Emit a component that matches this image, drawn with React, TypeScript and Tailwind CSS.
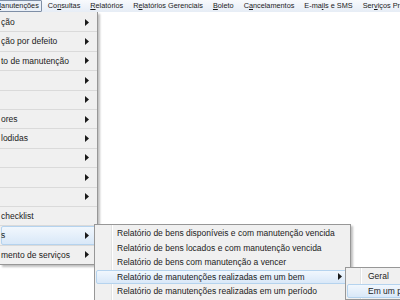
import React from "react"

const font = { fontFamily: '"Liberation Sans", Arial, sans-serif' }

function Arrow() {
  return (
    <svg width="4" height="7" viewBox="0 0 4 7" className="shrink-0">
      <path d="M0 0 L4 3.5 L0 7 Z" fill="#1a1a1a" />
    </svg>
  )
}

const topItems: { label: string; key: number }[] = [
  { label: "Manutenções", key: 0 },
  { label: "Consultas", key: 2 },
  { label: "Relatórios", key: 0 },
  { label: "Relatórios Gerenciais", key: 1 },
  { label: "Boleto", key: 0 },
  { label: "Cancelamentos", key: 1 },
  { label: "E-mails e SMS", key: 4 },
  { label: "Serviços Pre", key: 3 },
]

function Label({ label, k }: { label: string; k: number }) {
  return (
    <>
      {label.slice(0, k)}
      <span className="underline underline-offset-1">{label[k]}</span>
      {label.slice(k + 1)}
    </>
  )
}

const menu1 = [
  { label: "ção", arrow: true },
  { label: "ção por defeito", arrow: true },
  { label: "to de manutenção", arrow: true },
  { label: "", arrow: true },
  { label: "", arrow: true },
  { label: "ores", arrow: true },
  { label: "lodidas", arrow: true },
  { label: "", arrow: true },
  { label: "", arrow: true },
  { label: "", arrow: true },
  { label: "checklist", arrow: false },
  { label: "s", arrow: true, active: true },
  { label: "mento de serviços", arrow: true },
]

const menu2 = [
  { label: "Relatório de bens disponíveis e com manutenção vencida" },
  { label: "Relatório de bens locados e com manutenção vencida" },
  { label: "Relatório de bens com manutenção a vencer" },
  { label: "Relatório de manutenções realizadas em um bem", arrow: true, active: true },
  { label: "Relatório de manutenções realizadas em um período" },
]

const menu3 = [{ label: "Geral" }, { label: "Em um período", active: true }]

export default function App() {
  return (
    <div className="relative w-[400px] h-[300px] overflow-hidden bg-white text-[#1b1b1b]" style={font}>
      {/* menu bar */}
      <div className="flex h-[12px] items-center whitespace-nowrap bg-gradient-to-b from-[#f8fafd] to-[#e6edf6] text-[7.3px] leading-none">
        {topItems.map((t, i) => (
          <div
            key={t.label}
            className={
              i === 0
                ? "-ml-[6px] mr-[1px] flex h-[12px] shrink-0 items-center rounded-[1px] border border-[#7f8fa6] bg-[#eaf0f8] pl-0 pr-[2px]"
                : "flex h-[12px] shrink-0 items-center px-[5px]"
            }
          >
            <Label label={t.label} k={t.key} />
          </div>
        ))}
      </div>

      {/* first dropdown */}
      <div className="absolute left-0 top-[12px] w-[98px] border-r border-b border-[#979797] bg-[#f0f0f0] shadow-[2px_2px_2px_rgba(0,0,0,0.25)] text-[8.5px] leading-none">
        <div className="flex flex-col pt-[1px]">
          {menu1.map((m, i) => (
            <div key={i} className="flex flex-col">
              <div
                className={
                  m.active
                    ? "mx-[1px] flex h-[18.4px] items-center justify-between rounded-[2px] border border-[#b5d3ee] bg-gradient-to-b from-[#f1f7fd] to-[#d9e8f8] pl-0 pr-[6px]"
                    : "mx-[1px] flex h-[18.4px] items-center justify-between border border-transparent pr-[6px]"
                }
              >
                <span className="whitespace-nowrap -ml-[1px]">{m.label}</span>
                {m.arrow && <Arrow />}
              </div>
              {i < menu1.length - 1 && <div className="h-px bg-[#dadada]" />}
            </div>
          ))}
        </div>
      </div>

      {/* second dropdown */}
      <div className="absolute left-[94px] top-[224px] w-[257px] border border-[#979797] bg-[#f0f0f0] shadow-[2px_2px_2px_rgba(0,0,0,0.25)] text-[8.5px] leading-none">
        <div className="relative flex flex-col py-[1px]">
          <div className="absolute left-[16px] top-0 bottom-0 w-px bg-[#e2e3e3]" />
          <div className="absolute left-[17px] top-0 bottom-0 w-px bg-white" />
          {menu2.map((m, i) => (
            <div
              key={i}
              className={
                m.active
                  ? "relative mx-[1px] flex h-[14.5px] items-center justify-between rounded-[2px] border border-[#b5d3ee] bg-gradient-to-b from-[#f1f7fd] to-[#d9e8f8] pl-[20px] pr-[6px]"
                  : "relative mx-[1px] flex h-[14.5px] items-center justify-between border border-transparent pl-[20px] pr-[6px]"
              }
            >
              <span className="whitespace-nowrap">{m.label}</span>
              {m.arrow && <Arrow />}
            </div>
          ))}
        </div>
      </div>

      {/* third dropdown */}
      <div className="absolute left-[345px] top-[267px] w-[80px] border border-[#979797] bg-[#f0f0f0] text-[8.5px] leading-none">
        <div className="relative flex flex-col py-[1px]">
          <div className="absolute left-[14px] top-0 bottom-0 w-px bg-[#e2e3e3]" />
          <div className="absolute left-[15px] top-0 bottom-0 w-px bg-white" />
          {menu3.map((m, i) => (
            <div
              key={i}
              className={
                m.active
                  ? "relative mx-[1px] flex h-[14.5px] items-center rounded-[2px] border border-[#b5d3ee] bg-gradient-to-b from-[#f1f7fd] to-[#d9e8f8] pl-[20px]"
                  : "relative mx-[1px] flex h-[14.5px] items-center border border-transparent pl-[20px]"
              }
            >
              <span className="whitespace-nowrap">{m.label}</span>
            </div>
          ))}
        </div>
      </div>
    </div>
  )
}
